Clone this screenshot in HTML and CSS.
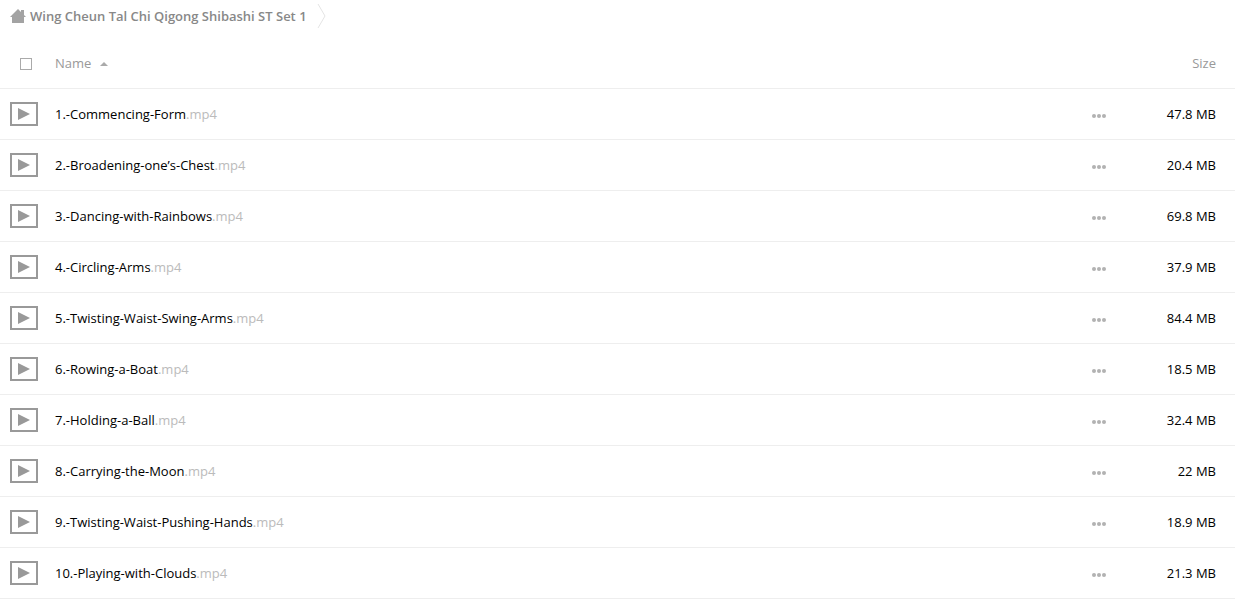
FILE: index.html
```html
<!DOCTYPE html>
<html lang="en">
<head>
    <meta charset="UTF-8">
    <meta name="viewport" content="width=device-width, initial-scale=1.0">
    <title>Files</title>
    <link rel="stylesheet" href="styles.css">
</head>
<body>

    <nav class="breadcrumb">
        <a class="crumb" href="#">
            <svg class="home-icon" viewBox="0 0 16 14" aria-hidden="true">
                <path d="M8 0L0 8h2v6h12V8h2l-2-2V1h-3v2z"/>
            </svg>
            <span>Wing Cheun Tal Chi Qigong Shibashi ST Set 1</span>
        </a>
        <svg class="crumb-arrow" viewBox="0 0 9 24" aria-hidden="true">
            <path d="M1 0l7 12l-7 12"/>
        </svg>
    </nav>

    <table class="file-table">
        <thead>
            <tr>
                <th class="col-icon"><input type="checkbox" class="select-all" aria-label="Select all"></th>
                <th class="col-name"><button type="button" class="sort-btn">Name <span class="sort-arrow"></span></button></th>
                <th class="col-action"></th>
                <th class="col-size"><button type="button" class="sort-btn">Size</button></th>
            </tr>
        </thead>
        <tbody id="file-list"></tbody>
    </table>

    <script src="script.js"></script>
</body>
</html>
```
FILE: styles.css
```css
body {
    margin: 0;
    background-color: #fff;
    color: #000;
    font-family: "Open Sans", Arial, sans-serif;
    font-size: 13px;
    line-height: 20px;
}
a {
    color: inherit;
    text-decoration: none;
}
button {
    padding: 0;
    border: none;
    background: none;
    color: inherit;
    font: inherit;
    cursor: pointer;
}

/* Breadcrumb */
.breadcrumb {
    display: flex;
    align-items: center;
    gap: 10px;
    height: 32px;
    padding: 0 10px 6px;
}
.crumb {
    display: flex;
    align-items: center;
    gap: 4px;
    color: #888;
    font-weight: 600;
}
.home-icon {
    width: 16px;
    height: 14px;
    fill: #a3a3a3;
}
.crumb-arrow {
    width: 9px;
    height: 24px;
    fill: none;
    stroke: #e4e4e4;
}

/* File list */
.file-table {
    width: 100%;
    table-layout: fixed;
    border-collapse: separate;
    border-spacing: 0;
}
.file-table th,
.file-table td {
    height: 50px;
    padding: 0;
    border-bottom: 1px solid #eee;
    text-align: left;
    vertical-align: middle;
}
.file-table th {
    color: #999;
    font-weight: normal;
}
.file-table .col-icon {
    width: 45px;
    padding-left: 10px;
}
.file-table .col-action {
    width: 54px;
}
.file-table .col-size {
    width: 70px;
    padding-right: 19px;
    text-align: right;
}
.select-all {
    display: block;
    appearance: none;
    width: 12px;
    height: 12px;
    margin: 2px 0 0 10px;
    border: 1px solid #aaa;
    background-color: #fff;
}
.select-all:checked {
    background-color: #aaa;
}
.sort-btn {
    display: inline-flex;
    align-items: center;
    gap: 9px;
}
.sort-arrow {
    margin-top: 2px;
    border: 4px solid transparent;
    border-top: none;
    border-bottom-color: #aaa;
}
.video-icon {
    display: block;
    width: 28px;
    height: 24px;
}
.extension {
    color: #bbb;
}
.more-btn {
    display: block;
    padding-top: 4px;
}
.more-icon {
    display: block;
    width: 14px;
    height: 4px;
    fill: #b2b2b2;
}
```
FILE: script.js
```javascript
const files = [
    { name: '1.-Commencing-Form', size: '47.8 MB' },
    { name: '2.-Broadening-one’s-Chest', size: '20.4 MB' },
    { name: '3.-Dancing-with-Rainbows', size: '69.8 MB' },
    { name: '4.-Circling-Arms', size: '37.9 MB' },
    { name: '5.-Twisting-Waist-Swing-Arms', size: '84.4 MB' },
    { name: '6.-Rowing-a-Boat', size: '18.5 MB' },
    { name: '7.-Holding-a-Ball', size: '32.4 MB' },
    { name: '8.-Carrying-the-Moon', size: '22 MB' },
    { name: '9.-Twisting-Waist-Pushing-Hands', size: '18.9 MB' },
    { name: '10.-Playing-with-Clouds', size: '21.3 MB' },
];

// Build one table row per file
document.getElementById('file-list').innerHTML = files.map(file => `
    <tr>
        <td class="col-icon">
            <svg class="video-icon" viewBox="0 0 28 24" aria-hidden="true">
                <rect x="1" y="1" width="26" height="22" fill="#fff" stroke="#999" stroke-width="2"/>
                <path d="M8 6l12 6l-12 6z" fill="#999"/>
            </svg>
        </td>
        <td class="col-name"><a href="#">${file.name}<span class="extension">.mp4</span></a></td>
        <td class="col-action">
            <button type="button" class="more-btn" aria-label="More actions">
                <svg class="more-icon" viewBox="0 0 14 4" aria-hidden="true">
                    <circle cx="2" cy="2" r="2"/>
                    <circle cx="7" cy="2" r="2"/>
                    <circle cx="12" cy="2" r="2"/>
                </svg>
            </button>
        </td>
        <td class="col-size">${file.size}</td>
    </tr>
`).join('');
```
